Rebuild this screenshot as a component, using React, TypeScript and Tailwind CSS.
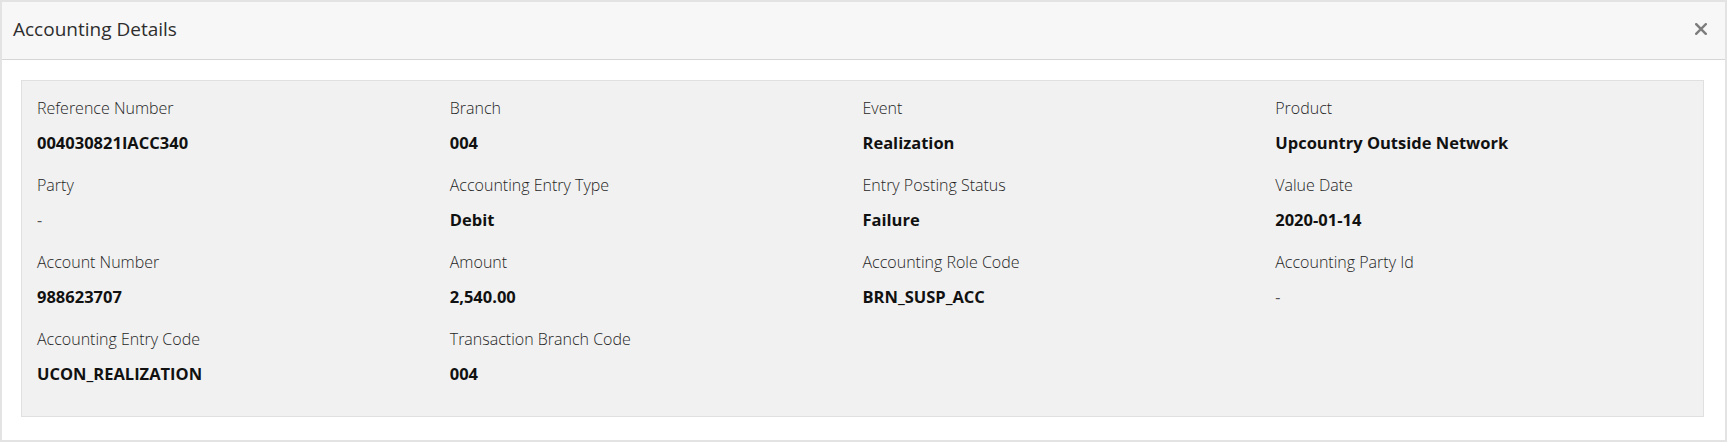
import React from 'react';

interface Field {
  label: string;
  value: string;
}

const fields: Field[] = [
  { label: 'Reference Number', value: '004030821IACC340' },
  { label: 'Branch', value: '004' },
  { label: 'Event', value: 'Realization' },
  { label: 'Product', value: 'Upcountry Outside Network' },
  { label: 'Party', value: '-' },
  { label: 'Accounting Entry Type', value: 'Debit' },
  { label: 'Entry Posting Status', value: 'Failure' },
  { label: 'Value Date', value: '2020-01-14' },
  { label: 'Account Number', value: '988623707' },
  { label: 'Amount', value: '2,540.00' },
  { label: 'Accounting Role Code', value: 'BRN_SUSP_ACC' },
  { label: 'Accounting Party Id', value: '-' },
  { label: 'Accounting Entry Code', value: 'UCON_REALIZATION' },
  { label: 'Transaction Branch Code', value: '004' },
];

const CloseIcon: React.FC = () => (
  <svg width="12" height="12" viewBox="0 0 12 12" className="text-[#7d7d7d]">
    <path d="M1.2 1.2 L10.8 10.8 M10.8 1.2 L1.2 10.8" stroke="currentColor" strokeWidth="2.4" strokeLinecap="square" />
  </svg>
);

export default function App() {
  return (
    <div
      className="w-[1727px] h-[442px] border-2 border-[#e3e3e3] bg-white flex flex-col"
      style={{ fontFamily: '"Open Sans", "Noto Sans", sans-serif' }}
    >
      {/* Header */}
      <div className="h-[58px] shrink-0 bg-[#f7f7f7] border-b border-[#d6d6d6] flex items-center justify-between pl-[11px] pr-[16px]">
        <h2 className="text-[19px] text-[#2e2e2e] leading-none -mt-[2px]">Accounting Details</h2>
        <button className="flex items-center justify-center w-4 h-4 -mt-[4px]">
          <CloseIcon />
        </button>
      </div>

      {/* Body */}
      <div className="flex-1 pt-[20px] pb-[23px] pl-[19px] pr-[21px]">
        <div className="h-full bg-[#f1f1f1] border border-[#e0e0e0] pt-[15px] px-[15px]">
          <div className="grid grid-cols-4 gap-y-[18px]">
            {fields.map((f) => (
              <div key={f.label} className="flex flex-col">
                <div className="h-6 leading-6 text-[16px] font-light text-[#1f1f1f]">{f.label}</div>
                {f.value === '-' ? (
                  <div className="h-6 leading-6 mt-[11px] text-[16px] font-normal text-[#555]">-</div>
                ) : (
                  <div className="h-6 leading-6 mt-[11px] text-[16.5px] font-bold text-[#111]">{f.value}</div>
                )}
              </div>
            ))}
          </div>
        </div>
      </div>
    </div>
  );
}
